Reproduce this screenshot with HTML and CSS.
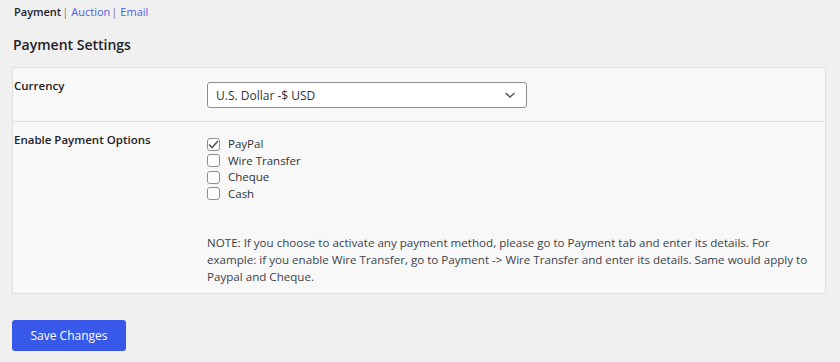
FILE: index.html
```html
<!DOCTYPE html>
<html lang="en">
<head>
    <meta charset="UTF-8">
    <meta name="viewport" content="width=device-width, initial-scale=1.0">
    <title>Payment Settings</title>
    <link rel="stylesheet" href="styles.css">
</head>
<body>
    <div class="wrap">
        <ul class="subsubsub">
            <li><a href="#" class="current">Payment</a>|</li>
            <li><a href="#">Auction</a>|</li>
            <li><a href="#">Email</a></li>
        </ul>

        <h2>Payment Settings</h2>

        <table class="form-table">
            <tr>
                <th>Currency</th>
                <td>
                    <div class="select">
                        <span>U.S. Dollar -$ USD</span>
                        <svg width="12" height="8" viewBox="0 0 12 8"><path d="M1.5 2 L6 6 L10.5 2" fill="none" stroke="#50575e" stroke-width="1.5"/></svg>
                    </div>
                </td>
            </tr>
            <tr>
                <th>Enable Payment Options</th>
                <td class="last">
                    <label class="check"><span class="box"><svg width="11" height="9" viewBox="0 0 11 9"><path d="M1 4.5 L4 7.5 L10 1" fill="none" stroke="#50575e" stroke-width="1.6"/></svg></span>PayPal</label>
                    <label class="check"><span class="box"></span>Wire Transfer</label>
                    <label class="check"><span class="box"></span>Cheque</label>
                    <label class="check"><span class="box"></span>Cash</label>
                    <p class="note">NOTE: If you choose to activate any payment method, please go to Payment tab and enter its details. For example: if you enable Wire Transfer, go to Payment -&gt; Wire Transfer and enter its details. Same would apply to Paypal and Cheque.</p>
                </td>
            </tr>
        </table>

        <button class="btn">Save Changes</button>
    </div>
</body>
</html>
```

FILE: styles.css
```css
body {
    font-family: "Open Sans", sans-serif;
    font-size: 12px;
    color: #1d2327;
    margin: 0;
    background-color: #f0f0f1;
}
.wrap {
    padding: 4px 14px 0 12px;
}
.subsubsub {
    list-style: none;
    margin: 0;
    padding: 0;
    display: flex;
    font-size: 11px;
    line-height: 16px;
    color: #787c82;
}
.subsubsub li {
    margin: 0 3px 0 2px;
}
.subsubsub li + li {
    margin-left: 0;
}
.subsubsub a {
    color: #4f5fe3;
    text-decoration: none;
    margin-right: 1px;
}
.subsubsub a.current {
    color: #1d2327;
    font-weight: 600;
}
h2 {
    font-size: 14px;
    line-height: 20px;
    font-weight: 600;
    margin: 15px 0 12px 1px;
}
.form-table {
    width: 100%;
    border-collapse: collapse;
    background: #f8f8f8;
    border: 1px solid #e0e0e0;
}
.form-table tr + tr {
    border-top: 1px solid #e0e0e0;
}
.form-table th {
    width: 193px;
    text-align: left;
    vertical-align: top;
    font-weight: 600;
    font-size: 11.5px;
    line-height: 17px;
    padding: 9px 0 0 1px;
}
.form-table td {
    padding: 14px 8px 13px 0;
}
.form-table td.last {
    padding-bottom: 8px;
}
.select {
    box-sizing: border-box;
    width: 320px;
    height: 26px;
    border: 1px solid #8c8f94;
    border-radius: 3px;
    background: #fff;
    display: flex;
    align-items: center;
    justify-content: space-between;
    padding: 0 10px 0 8px;
    color: #2c3338;
}
.check {
    display: flex;
    align-items: center;
    gap: 8px;
    font-size: 11.5px;
    line-height: 16.5px;
    color: #2c3338;
}
.box {
    width: 11px;
    height: 11px;
    border: 1px solid #8c8f94;
    border-radius: 3px;
    background: #fff;
    display: flex;
    align-items: center;
    justify-content: center;
}
.note {
    margin: 32px 0 0 0;
    font-size: 11.6px;
    line-height: 17px;
    color: #3c434a;
}
.btn {
    margin-top: 26px;
    background-color: #3858e9;
    color: white;
    border: none;
    border-radius: 3px;
    font-family: inherit;
    font-size: 12px;
    width: 114px;
    height: 31px;
}
```
